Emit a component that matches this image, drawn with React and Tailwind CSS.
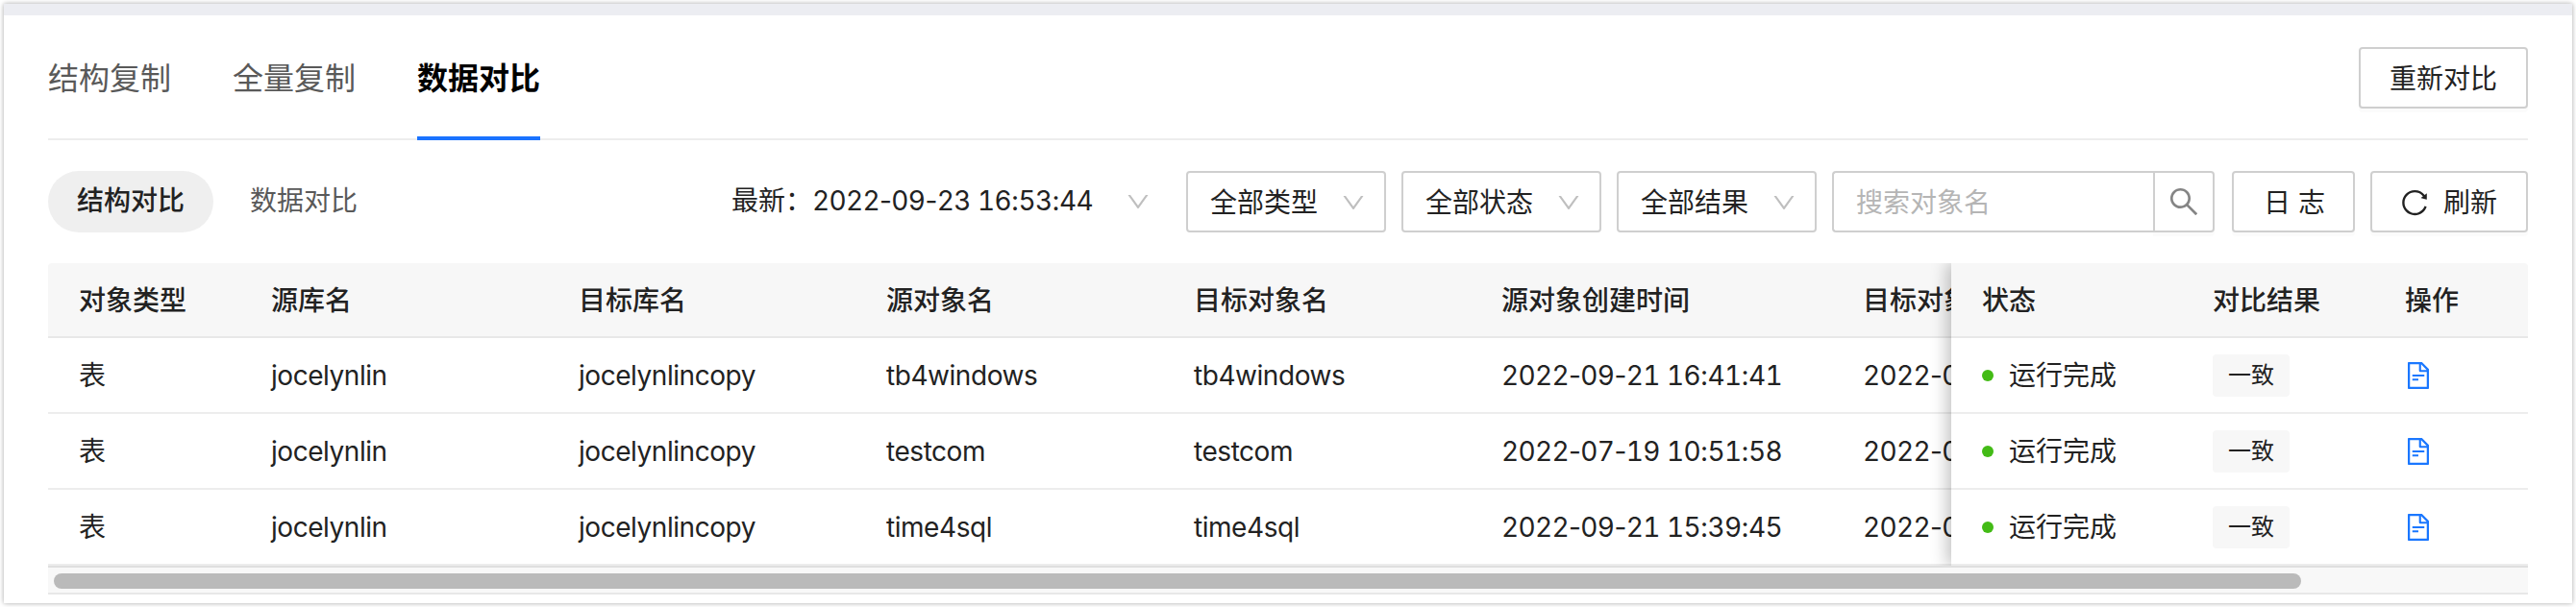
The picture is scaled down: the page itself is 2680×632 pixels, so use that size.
import React from "react";
import { AiOutlineDown, AiOutlineSearch, AiOutlineReload, AiOutlineFileText } from "react-icons/ai";

const rows = [
  { db: "jocelynlin", target: "jocelynlincopy", name: "tb4windows", created: "2022-09-21 16:41:41", targetCreated: "2022-09-21 16:41:41" },
  { db: "jocelynlin", target: "jocelynlincopy", name: "testcom", created: "2022-07-19 10:51:58", targetCreated: "2022-09-21 10:51:58" },
  { db: "jocelynlin", target: "jocelynlincopy", name: "time4sql", created: "2022-09-21 15:39:45", targetCreated: "2022-09-21 15:39:45" },
];

const scrollCols = "grid grid-cols-[200px_320px_320px_320px_320px_376px_124px] w-[1980px] items-center";
const fixedCols = "grid grid-cols-[240px_200px_160px] items-center";
const headRow = "h-[78px] border-b-2 border-[#e8e8e8] bg-[#f7f7f7] pt-px font-medium";
const bodyRow = "h-[79px] border-b-2 border-[#ededed] bg-white pt-px";

// Digits share one width; separators keep their natural width.
function Stamp({ value }) {
  return (
    <span className="tracking-[-0.64px]">
      {value.split(/(\d+)/).filter(Boolean).map((part, i) =>
        /\d/.test(part) ? <span key={i} className="tabular-nums">{part}</span> : part
      )}
    </span>
  );
}

function Cell({ children, className = "" }) {
  return <div className={"pl-8 whitespace-nowrap " + className}>{children}</div>;
}

function Select({ label }) {
  return (
    <div className="flex h-16 w-[208px] items-center justify-between rounded-[4px] border-2 border-[#cfcfcf] pl-[23px] pr-[18px] pt-px">
      <span>{label}</span>
      <AiOutlineDown className="size-7 text-[#bfbfbf]" />
    </div>
  );
}

function Button({ children, className }) {
  return (
    <button className={"flex h-16 items-center justify-center rounded-[4px] border-2 border-[#cfcfcf] bg-white whitespace-nowrap shadow-[0_4px_0_rgba(0,0,0,0.016)] " + className}>
      {children}
    </button>
  );
}

export default function App() {
  return (
    <div className="h-[632px] w-[2680px] overflow-hidden bg-white p-1 font-[Inter,'Noto_Sans_CJK_SC',sans-serif] text-[28px] leading-[44px] text-[#222222]">
      <div className="flex h-[624px] flex-col bg-white shadow-[0_0_5px_rgba(0,0,0,0.35)]">
        <div className="h-3 bg-[#ecedf2]" />
        <div className="flex flex-col px-[46px]">
          <header className="flex h-[130px] items-start justify-between border-b-2 border-[#ededed]">
            <nav className="flex gap-16 text-[32px] text-[#595959]">
              <span className="h-[130px] pt-11">结构复制</span>
              <span className="h-[130px] pt-11">全量复制</span>
              <span className="h-[130px] border-b-4 border-[#1a73ff] pt-11 font-bold text-black">数据对比</span>
            </nav>
            <Button className="mt-[33px] w-[176px] pt-px">重新对比</Button>
          </header>

          <div className="mt-8 flex h-16 items-center justify-between">
            <div className="flex items-center">
              <span className="flex h-16 w-[172px] items-center justify-center rounded-full bg-[#efefef] pb-0.5 font-medium">结构对比</span>
              <span className="ml-[38px] pb-0.5 text-[#595959]">数据对比</span>
            </div>
            <div className="flex items-center">
              <div className="flex items-center whitespace-nowrap">
                <span className="pb-0.5">最新：</span>
                <span className="w-[290px] pb-0.5"><Stamp value="2022-09-23 16:53:44" /></span>
                <AiOutlineDown className="ml-[35px] size-7 text-[#bfbfbf]" />
              </div>
              <div className="ml-9 flex gap-4">
                <Select label="全部类型" />
                <Select label="全部状态" />
                <Select label="全部结果" />
                <div className="flex h-16 w-[398px]">
                  <div className="flex flex-1 items-center rounded-l-[4px] border-2 border-r-0 border-[#cfcfcf] pl-[23px] pt-px text-[#b5b5b5]">搜索对象名</div>
                  <button className="flex w-16 items-center justify-center rounded-r-[4px] border-2 border-[#cfcfcf] text-[#858585] shadow-[0_4px_0_rgba(0,0,0,0.016)]">
                    <AiOutlineSearch className="size-9" />
                  </button>
                </div>
              </div>
              <Button className="ml-[18px] w-32 pl-0.5 pt-px">日 志</Button>
              <Button className="ml-4 w-[164px] gap-3.5 pr-0.5 pt-px">
                <AiOutlineReload className="size-8" />
                刷新
              </Button>
            </div>
          </div>

          <div className="mt-8 flex overflow-hidden rounded-t-[4px]">
            <div className="w-[1980px] overflow-hidden">
              <div className={scrollCols + " " + headRow}>
                <Cell>对象类型</Cell>
                <Cell>源库名</Cell>
                <Cell>目标库名</Cell>
                <Cell>源对象名</Cell>
                <Cell>目标对象名</Cell>
                <Cell>源对象创建时间</Cell>
                <Cell className="overflow-hidden">目标对象创建时间</Cell>
              </div>
              {rows.map((r) => (
                <div key={r.name} className={scrollCols + " " + bodyRow}>
                  <Cell>表</Cell>
                  <Cell className="tracking-[-0.45px]">{r.db}</Cell>
                  <Cell className="tracking-[-0.45px]">{r.target}</Cell>
                  <Cell className="tracking-[-0.45px]">{r.name}</Cell>
                  <Cell className="tracking-[-0.45px]">{r.name}</Cell>
                  <Cell><Stamp value={r.created} /></Cell>
                  <Cell className="overflow-hidden"><Stamp value={r.targetCreated} /></Cell>
                </div>
              ))}
            </div>
            <div className="relative z-10 w-[600px] shadow-[-4px_0_16px_rgba(0,0,0,0.25)]">
              <div className={fixedCols + " " + headRow}>
                <Cell>状态</Cell>
                <Cell>对比结果</Cell>
                <Cell>操作</Cell>
              </div>
              {rows.map((r) => (
                <div key={r.name} className={fixedCols + " " + bodyRow}>
                  <Cell>
                    <div className="flex items-center gap-4">
                      <i className="size-3 rounded-full bg-[#43bb16]" />
                      运行完成
                    </div>
                  </Cell>
                  <Cell>
                    <div className="flex h-11 w-20 items-center justify-center rounded-[4px] bg-[#f7f7f7] text-2xl">一致</div>
                  </Cell>
                  <Cell>
                    <AiOutlineFileText className="-ml-0.5 size-8 text-[#1a77ff]" />
                  </Cell>
                </div>
              ))}
            </div>
          </div>

          <div className="h-[30px] border-y-2 border-t-[#dfdfdf] border-b-[#e8e8e8] bg-[#f8f8f8] pt-1.5 pl-1.5">
            <div className="h-4 w-[2338px] rounded-full bg-[#bababa]" />
          </div>
        </div>
      </div>
    </div>
  );
}
